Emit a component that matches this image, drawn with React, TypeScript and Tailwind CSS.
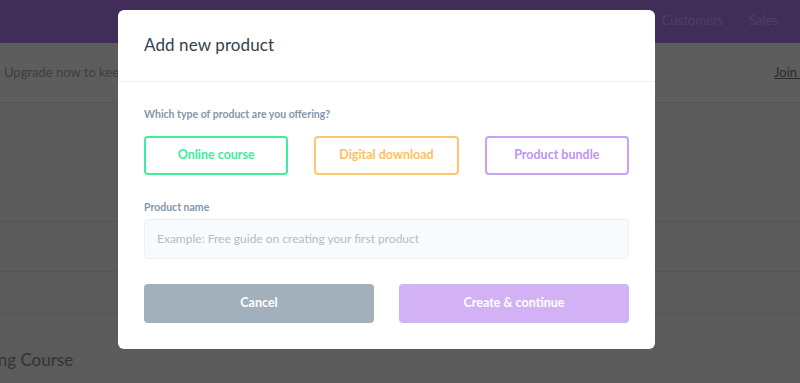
const font = { fontFamily: "Lato, 'Open Sans', sans-serif" };

const TypeButton = ({ label, tone }: { label: string; tone: string }) => (
  <button className={`h-[39px] flex-1 rounded-[4px] border-2 bg-white text-[12.5px] font-bold ${tone}`}>
    {label}
  </button>
);

const AddProductModal = () => (
  <div className="absolute left-[118px] top-[10px] w-[537px] h-[339px] bg-white rounded-[6px] flex flex-col">
    <div className="h-[72px] flex items-center px-[26px] border-b border-[#eef0f4]">
      <h2 className="text-[17px] text-[#36414d] tracking-[0.1px] -mt-[2px]">Add new product</h2>
    </div>
    <div className="flex flex-col px-[26px] pt-[25px]">
      <span className="text-[10.5px] font-bold text-[#8596a9]">Which type of product are you offering?</span>
      <div className="flex flex-row gap-[26px] mt-[13px]">
        <TypeButton label="Online course" tone="border-[#40ec9e] text-[#40ec9e]" />
        <TypeButton label="Digital download" tone="border-[#ffc670] text-[#ffbf5e]" />
        <TypeButton label="Product bundle" tone="border-[#c6a3f6] text-[#bd95f3]" />
      </div>
      <span className="text-[10.5px] font-bold text-[#8596a9] mt-[25px]">Product name</span>
      <div className="mt-[3px] h-[40px] rounded-[4px] border border-[#eef0f4] bg-[#f9fafc] flex items-center px-[12px]">
        <span className="text-[12px] text-[#b3bcc6]">Example: Free guide on creating your first product</span>
      </div>
      <div className="flex flex-row gap-[25px] mt-[25px]">
        <button className="h-[39px] flex-1 rounded-[4px] bg-[#a2b0bb] text-white text-[12.5px] font-bold">Cancel</button>
        <button className="h-[39px] flex-1 rounded-[4px] bg-[#d2b2f4] text-white text-[12.5px] font-bold">Create &amp; continue</button>
      </div>
    </div>
  </div>
);

export default function App() {
  return (
    <div className="relative w-[800px] h-[383px] overflow-hidden bg-[#5b5b5b]" style={font}>
      <div className="h-[43px] bg-[#412e58] flex flex-row items-center justify-end gap-[26px] pr-[22px] pb-[2px]">
        <span className="text-[13px] text-[#4d3f66]">Customers</span>
        <span className="text-[13px] text-[#4d3f66]">Sales</span>
      </div>
      <div className="h-[60px] bg-[#5d5d5d] border-b border-[#545454] flex flex-row items-center justify-between pl-[4px] pr-0">
        <span className="text-[13px] text-[#3d3d3d]">Upgrade now to keep your features</span>
        <span className="text-[13px] text-[#2c2c2c] underline w-[26px] overflow-hidden whitespace-nowrap">Join now</span>
      </div>
      <div className="h-[119px] border-b border-[#545454]" />
      <div className="h-[50px] border-b border-[#545454]" />
      <div className="h-[42px] border-b border-[#545454]" />
      <div className="pt-[33px] -ml-[60px]">
        <span className="text-[17px] text-[#333333]">Marketing Course</span>
      </div>
      <AddProductModal />
    </div>
  );
}
